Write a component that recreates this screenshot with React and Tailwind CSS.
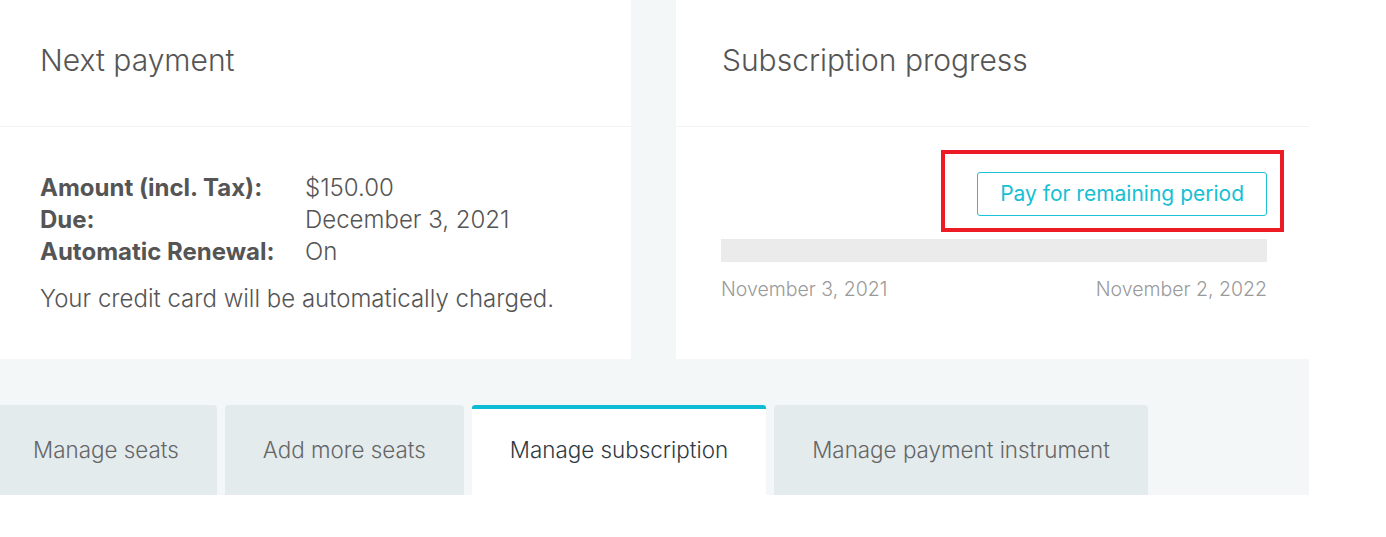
export default function App() {
  const tabs = [
    { label: 'Manage seats', active: false },
    { label: 'Add more seats', active: false },
    { label: 'Manage subscription', active: true },
    { label: 'Manage payment instrument', active: false },
  ];

  return (
    <div className="min-h-screen bg-white font-['Inter',sans-serif]">
      <div className="w-[1309px] bg-[#f3f7f7]">
        {/* Cards */}
        <div className="flex gap-[45px]">
          <div className="w-[631px] h-[359px] bg-white">
            <div className="h-[127px] flex items-center pl-[40px] border-b border-[#f2f4f4]">
              <h2 className="text-[30px] font-light text-[#555] pb-[5px]">Next payment</h2>
            </div>
            <div className="pl-[40px] pt-[45px] text-[24px] text-[#555]">
              <div className="grid grid-cols-[265px_1fr] leading-[32px]">
                <span className="font-bold">Amount (incl. Tax):</span>
                <span className="font-light">$150.00</span>
                <span className="font-bold">Due:</span>
                <span className="font-light">December 3, 2021</span>
                <span className="font-bold">Automatic Renewal:</span>
                <span className="font-light">On</span>
              </div>
              <p className="mt-[15px] font-light leading-[32px]">Your credit card will be automatically charged.</p>
            </div>
          </div>

          <div className="w-[633px] h-[359px] bg-white">
            <div className="h-[127px] flex items-center pl-[46px] border-b border-[#f2f4f4]">
              <h2 className="text-[30px] font-light text-[#555] pb-[5px]">Subscription progress</h2>
            </div>
            <div className="pl-[45px] pr-[42px] pt-[45px]">
              <div className="flex justify-end">
                <div className="relative">
                  <button className="h-[44px] px-[22px] border border-[#1ac3d6] rounded-[3px] text-[21px] text-[#17bfd4] bg-white">
                    Pay for remaining period
                  </button>
                  <div className="absolute -left-[36px] -right-[17px] -top-[22px] -bottom-[16px] border-[4px] border-[#ed1c24] pointer-events-none" />
                </div>
              </div>
              <div className="mt-[23px] h-[23px] bg-[#ebebeb]" />
              <div className="mt-[13px] flex justify-between text-[19.5px] font-light text-[#9a9a9a]">
                <span>November 3, 2021</span>
                <span>November 2, 2022</span>
              </div>
            </div>
          </div>
        </div>

        {/* Tabs */}
        <div className="pt-[46px] flex gap-[8px] -ml-[5px]">
          {tabs.map((t) => (
            <div
              key={t.label}
              className={
                t.active
                  ? 'h-[90px] px-[38px] pb-[4px] flex items-center bg-white border-t-[4px] border-[#0bbcd4] rounded-t-[3px] text-[22.4px] font-light text-[#2e3a44]'
                  : 'h-[90px] px-[38px] flex items-center bg-[#e4ebed] rounded-t-[4px] text-[22.4px] font-light text-[#666]'
              }
            >
              {t.label}
            </div>
          ))}
        </div>
      </div>
    </div>
  );
}
